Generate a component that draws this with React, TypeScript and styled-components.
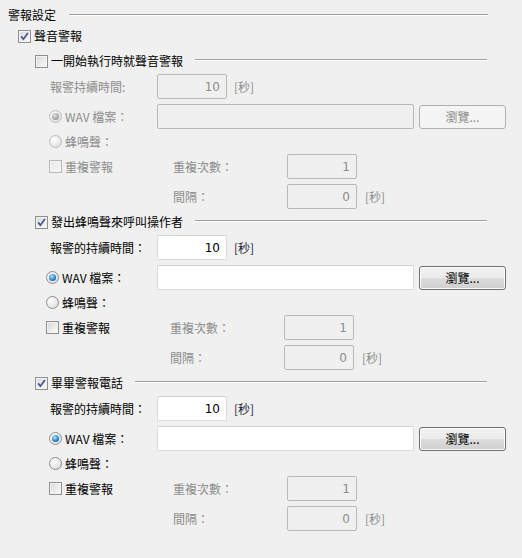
import React from 'react'
import styled, { createGlobalStyle, css } from 'styled-components'

const GlobalStyle = createGlobalStyle`
  html, body {
    margin: 0;
    padding: 0;
    background: #f0f0f0;
  }
  body {
    font-family: "Noto Sans CJK TC", "Noto Sans", sans-serif;
    font-size: 12px;
    color: #000;
  }
`

const Page = styled.div`
  width: 522px;
  height: 558px;
  box-sizing: border-box;
  padding: 6px 34px 0 8px;
  display: flex;
  flex-direction: column;
`

const TitleRow = styled.div`
  height: 18px;
  display: flex;
  align-items: center;
  gap: 13px;
`

const Rule = styled.div`
  flex: 1;
  height: 0;
  margin-top: -1px;
  border-top: 1px solid #a0a0a0;
  border-bottom: 1px solid #ffffff;
`

const HeaderRule = styled(Rule)`
  margin-top: -3px;
  margin-right: 1px;
`

const Text = styled.span<{ $disabled?: boolean }>`
  line-height: 14px;
  white-space: nowrap;
  color: ${(p) => (p.$disabled ? '#8d8d8d' : '#000')};
`

const MainRow = styled.div`
  height: 24px;
  display: flex;
  align-items: center;
  gap: 3px;
  padding-left: 10px;
  margin-bottom: 1px;
`

const Box = styled.span<{ $disabled?: boolean }>`
  width: 13px;
  height: 13px;
  box-sizing: border-box;
  flex: none;
  display: inline-flex;
  align-items: center;
  justify-content: center;
  border: 1px solid ${(p) => (p.$disabled ? '#b8b8b8' : '#8e8f8f')};
  background: ${(p) =>
    p.$disabled
      ? 'linear-gradient(135deg, #e6e6e6, #f7f7f7)'
      : 'linear-gradient(135deg, #d8d8d8, #fbfbfb)'};
  box-shadow: inset 0 0 0 1px #f4f4f4;

  svg {
    display: block;
  }
`

const Radio = styled.span<{ $on?: boolean; $disabled?: boolean }>`
  width: 13px;
  height: 13px;
  box-sizing: border-box;
  flex: none;
  border-radius: 50%;
  display: inline-flex;
  align-items: center;
  justify-content: center;
  border: 1px solid ${(p) => (p.$disabled ? '#bdbdbd' : '#8e8f8f')};
  background: radial-gradient(circle at 35% 35%, #ffffff, #d6d6d6);

  &::after {
    content: '';
    display: ${(p) => (p.$on ? 'block' : 'none')};
    width: 7px;
    height: 7px;
    border-radius: 50%;
    background: ${(p) =>
      p.$disabled
        ? 'radial-gradient(circle at 40% 35%, #e2e2e2, #a4a4a4 60%, #8a8a8a)'
        : 'radial-gradient(circle at 40% 35%, #b9e8ff, #2b86cf 55%, #0b3f78)'};
  }
`

const Group = styled.div`
  display: flex;
  flex-direction: column;
  margin-bottom: 1px;
`

const GroupHeader = styled.div`
  height: 24px;
  display: flex;
  align-items: center;
  padding-left: 27px;

  ${Box} {
    margin-right: 3px;
  }
  ${Text} {
    margin-right: 12px;
  }
`

const Row = styled.div<{ $top?: number; $shift?: number }>`
  height: 25px;
  display: flex;
  align-items: center;
  margin-top: ${(p) => p.$top ?? 0}px;
  padding-left: ${(p) => 41 - (p.$shift ?? 0)}px;
`

const Cell = styled.div<{ $w: number; $pad?: number }>`
  width: ${(p) => p.$w}px;
  flex: none;
  display: flex;
  align-items: center;
  gap: 3px;
  padding-left: ${(p) => p.$pad ?? 0}px;
  box-sizing: border-box;
`

const TextBox = styled.div<{ $w: number; $disabled?: boolean }>`
  width: ${(p) => p.$w}px;
  height: 25px;
  box-sizing: border-box;
  flex: none;
  border-radius: 2px;
  padding-right: 6px;
  display: flex;
  align-items: center;
  justify-content: flex-end;
  font-family: "DejaVu Sans", "Noto Sans", sans-serif;
  font-size: 12px;
  ${(p) =>
    p.$disabled
      ? css`
          background: #f0f0f0;
          border: 1px solid #b9b9b9;
          color: #8d8d8d;
        `
      : css`
          background: #ffffff;
          border: 1px solid #dcdcdc;
          border-top-color: #d2d2d2;
          color: #000;
        `}
`

const Unit = styled(Text)<{ $gap: number }>`
  margin-left: ${(p) => p.$gap}px;
  color: ${(p) => (p.$disabled ? '#8d8d8d' : '#1c1c3c')};
`

const Button = styled.button<{ $disabled?: boolean }>`
  flex: none;
  width: 87px;
  height: 24px;
  margin-left: 5px;
  box-sizing: border-box;
  border-radius: 3px;
  padding: 0;
  font-family: "Noto Sans CJK TC", "Noto Sans", sans-serif;
  font-size: 12px;
  line-height: 14px;
  ${(p) =>
    p.$disabled
      ? css`
          border: 1px solid #adb2b5;
          background: #f4f4f4;
          color: #8d8d8d;
        `
      : css`
          border: 1px solid #707070;
          background: linear-gradient(#f2f2f2 0%, #ebebeb 50%, #dddddd 51%, #cfcfcf 100%);
          color: #000;
          box-shadow: inset 0 0 0 1px #fcfcfc;
        `}
`

const Check = () => (
  <svg width="9" height="9" viewBox="0 0 9 9">
    <path d="M1.2 4.4 L3.4 7.2 L7.9 0.9" fill="none" stroke="#41558f" strokeWidth="1.7" />
  </svg>
)

const AlarmGroup: React.FC<{
  title: string
  checked: boolean
  durationLabel: string
  shift?: number
}> = ({ title, checked, durationLabel, shift = 0 }) => {
  const off = !checked
  return (
    <Group>
      <GroupHeader>
        <Box>{checked && <Check />}</Box>
        <Text>{title}</Text>
        <HeaderRule />
      </GroupHeader>

      <Row $top={1}>
        <Cell $w={108} $pad={1}>
          <Text $disabled={off}>{durationLabel}</Text>
        </Cell>
        <TextBox $w={70} $disabled={off}>10</TextBox>
        <Unit $gap={7} $disabled={off}>[秒]</Unit>
      </Row>

      <Row $top={5} $shift={shift}>
        <Cell $w={108 + shift}>
          <Radio $on $disabled={off} />
          <Text $disabled={off}>WAV 檔案：</Text>
        </Cell>
        <TextBox $w={257} $disabled={off} />
        <Button $disabled={off}>瀏覽...</Button>
      </Row>

      <Row $shift={shift}>
        <Cell $w={108}>
          <Radio $disabled={off} />
          <Text $disabled={off}>蜂鳴聲：</Text>
        </Cell>
      </Row>

      <Row $shift={shift}>
        <Cell $w={124}>
          <Box $disabled={off} />
          <Text $disabled={off}>重複警報</Text>
        </Cell>
        <Cell $w={114}>
          <Text $disabled>重複次數：</Text>
        </Cell>
        <TextBox $w={70} $disabled>1</TextBox>
      </Row>

      <Row $top={5} $shift={shift}>
        <Cell $w={124} />
        <Cell $w={114}>
          <Text $disabled>間隔：</Text>
        </Cell>
        <TextBox $w={70} $disabled>0</TextBox>
        <Unit $gap={8} $disabled>[秒]</Unit>
      </Row>
    </Group>
  )
}

export default function App() {
  return (
    <>
      <GlobalStyle />
      <Page>
        <TitleRow>
          <Text>警報設定</Text>
          <Rule />
        </TitleRow>

        <MainRow>
          <Box>
            <Check />
          </Box>
          <Text>聲音警報</Text>
        </MainRow>

        <AlarmGroup title="一開始執行時就聲音警報" checked={false} durationLabel="報警持續時間:" />
        <AlarmGroup title="發出蜂鳴聲來呼叫操作者" checked durationLabel="報警的持續時間：" shift={3} />
        <AlarmGroup title="畢畢警報電話" checked durationLabel="報警的持續時間：" />
      </Page>
    </>
  )
}
